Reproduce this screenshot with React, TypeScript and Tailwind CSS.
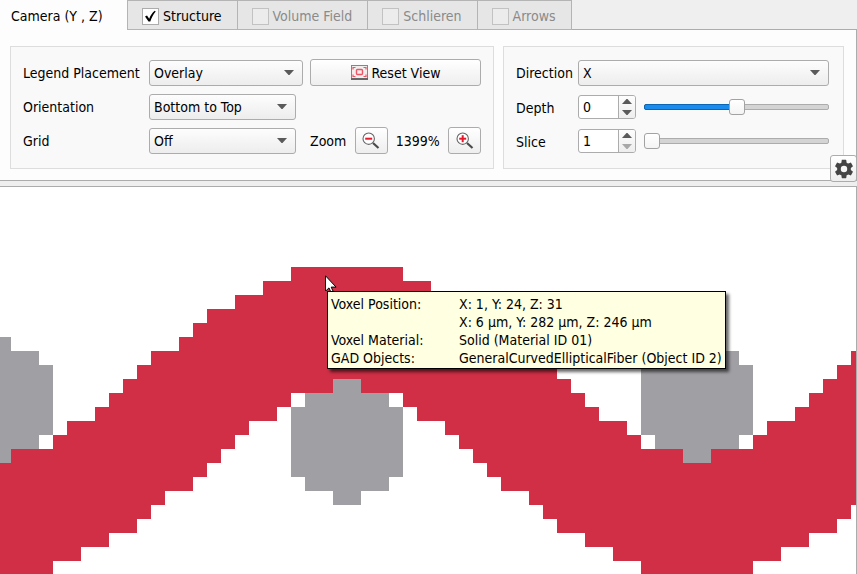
import { useState } from "react"
import type { ReactNode } from "react"

const CELL = 14

// [row, first column, end column]
type Run = [number, number, number]

const FIBER: Run[] = [
    [0, 20, 28],
    [1, 18, 30],
    [2, 16, 32],
    [3, 14, 34],
    [4, 13, 35],
    [5, 12, 36],
    [6, 10, 38], [6, 60, 61],
    [7, 9, 39], [7, 59, 61],
    [8, 8, 40], [8, 58, 61],
    [9, 7, 20], [9, 28, 41], [9, 57, 61],
    [10, 6, 19], [10, 29, 42], [10, 56, 61],
    [11, 4, 17], [11, 31, 44], [11, 54, 61],
    [12, 3, 16], [12, 32, 45], [12, 53, 61],
    [13, 0, 15], [13, 33, 61],
    [14, -1, 14], [14, 34, 61],
    [15, -1, 13], [15, 35, 61],
    [16, -1, 11], [16, 37, 61],
    [17, -1, 10], [17, 38, 60],
    [18, -1, 9], [18, 39, 59],
    [19, -1, 7], [19, 41, 57],
    [20, -1, 5], [20, 43, 55],
    [21, -1, 3], [21, 45, 53],
]

// cross fibers: [center column, top row]
const CROSS_FIBERS: [number, number][] = [[-1, 5], [24, 8], [49, 5]]
const CROSS_HALF_WIDTHS = [1, 3, 4, 4, 4, 4, 4, 3, 1]

const VoxelView = () => (
    <svg className="block min-w-0 flex-1" shapeRendering="crispEdges" role="img" aria-label="Voxel slice">
        <g transform="translate(11 80)">
            {FIBER.map(([row, start, end]) => (
                <rect key={`${row}-${start}`} x={start * CELL} y={row * CELL} width={(end - start) * CELL} height={CELL} fill="#d02f46" />
            ))}
            {CROSS_FIBERS.map(([center, top]) =>
                CROSS_HALF_WIDTHS.map((half, i) => (
                    <rect key={`${center}-${i}`} x={(center - half) * CELL} y={(top + i) * CELL} width={half * 2 * CELL} height={CELL} fill="#a09fa4" />
                ))
            )}
        </g>
    </svg>
)

const BUTTON = "flex h-[27px] items-center justify-center rounded-[3px] border border-[#acacac] bg-linear-to-b from-white to-[#eeeeee]"

const Combo = ({ id, options, className }: { id: string, options: string[], className: string }) => (
    <div className={`relative ${className}`}>
        <select id={id} className="block h-[26px] w-full appearance-none rounded-[3px] border border-[#acacac] bg-linear-to-b from-[#fdfdfd] to-[#ededed] pr-6 pl-1">
            {options.map((option) => <option key={option}>{option}</option>)}
        </select>
        <svg className="pointer-events-none absolute top-[10px] right-[9px]" width="10" height="6" viewBox="0 0 10 6">
            <path d="M0 0h10L5.5 5h-1z" fill="#5a5a5a" />
        </svg>
    </div>
)

const CheckTab = ({ label, defaultChecked, disabled }: { label: string, defaultChecked?: boolean, disabled?: boolean }) => (
    <label className={`flex h-[30px] items-center gap-1 border-t border-r border-b border-[#b4b4b4] bg-[#e6e6e6] pr-[15px] pl-[14px] pt-[2px] ${disabled ? "text-[#8a8a8a]" : ""}`}>
        <span className="relative flex">
            <input type="checkbox" defaultChecked={defaultChecked} disabled={disabled} className="peer size-[17px] appearance-none border border-[#acacac] bg-white disabled:border-[#c2c2c2] disabled:bg-[#ececec]" />
            <svg className="pointer-events-none absolute inset-0 hidden peer-checked:block" width="17" height="17" viewBox="0 0 17 17">
                <path d="M3 8.5l2-1 2.2 3.3C8.500 7.500 10.300 4.600 12.800 2.800l.9.7C11.200 6.300 9.600 9.800 8.300 13.600H6.500z" fill="#000" />
            </svg>
        </span>
        <span>{label}</span>
    </label>
)

const SliceRow = ({ label, min, initial, position }: { label: string, min: number, initial: number, position: number }) => {

    const [value, setValue] = useState(initial)
    const [slider, setSlider] = useState(position)
    const id = label.toLowerCase()
    const atMin = value <= min

    return (
        <div className="flex h-[27px] items-center">
            <label htmlFor={id} className="w-[62px] pt-[2px]">{label}</label>
            <div className="flex h-[24px] w-[58px] overflow-hidden rounded-[3px] border border-[#acacac] bg-white">
                <input
                    id={id}
                    type="number"
                    value={value}
                    onChange={(e) => setValue(Number(e.target.value))}
                    className="w-0 min-w-0 flex-1 appearance-none pl-1 outline-none [-moz-appearance:textfield] [&::-webkit-inner-spin-button]:appearance-none"
                />
                <div className="flex w-[17px] flex-col border-l border-[#acacac] bg-linear-to-b from-[#fdfdfd] to-[#eeeeee]">
                    <button type="button" aria-label={`Increase ${id}`} onClick={() => setValue(value + 1)} className="flex flex-1 items-center justify-center">
                        <svg width="10" height="5" viewBox="0 0 10 5"><path d="M0 5L4.500 0h1L10 5z" fill="#5a5a5a" /></svg>
                    </button>
                    <button type="button" aria-label={`Decrease ${id}`} disabled={atMin} onClick={() => setValue(value - 1)} className="flex flex-1 items-center justify-center">
                        <svg width="10" height="5" viewBox="0 0 10 5"><path d="M0 0h10L5.500 5h-1z" fill={atMin ? "#a8a8a8" : "#5a5a5a"} /></svg>
                    </button>
                </div>
            </div>
            <div className="relative ml-2 flex min-w-0 flex-1 items-center">
                <div className="absolute inset-x-0 h-[6px] overflow-hidden rounded-[2px] border border-[#acacac] bg-[#d4d4d4]" />
                <div className="absolute left-0 h-[6px] rounded-[2px] border border-[#0b66b4] bg-[#1a8cee]" style={{ width: `${slider}%`, opacity: slider > 0 ? 1 : 0 }} />
                <input
                    type="range"
                    aria-label={`${label} position`}
                    value={slider}
                    onChange={(e) => setSlider(Number(e.target.value))}
                    className="relative h-4 w-full appearance-none bg-transparent [&::-webkit-slider-thumb]:size-4 [&::-webkit-slider-thumb]:appearance-none [&::-webkit-slider-thumb]:rounded-[3px] [&::-webkit-slider-thumb]:border [&::-webkit-slider-thumb]:border-[#a2a2a2] [&::-webkit-slider-thumb]:bg-linear-to-b [&::-webkit-slider-thumb]:from-white [&::-webkit-slider-thumb]:to-[#f4f4f4]"
                />
            </div>
        </div>
    )
}

const ZoomIcon = ({ plus }: { plus?: boolean }) => (
    <svg width="18" height="18" viewBox="0 0 18 18" fill="none">
        <path d="M11 11l5.500 5" stroke="#4a4a4a" strokeWidth="2.200" />
        <circle cx="6.700" cy="6.700" r="5.700" fill="#fff" stroke="#666" strokeWidth="1.100" />
        <path d="M3.200 6.700h7" stroke="#e8192c" strokeWidth="2" />
        {plus && <path d="M6.700 3.200v7" stroke="#e8192c" strokeWidth="2" />}
    </svg>
)

const ResetIcon = () => (
    <svg width="17" height="15" viewBox="0 0 17 15" fill="none">
        <rect x=".5" y=".5" width="16" height="13" fill="#f3eeee" stroke="#858585" />
        <path d="M0 14h17" stroke="#666" strokeWidth="2" />
        <rect x="5.500" y="4.500" width="6" height="5" rx="1" stroke="#ee5565" strokeWidth="1.400" />
        <path d="M2 4.500V2.500h2.500M12.500 2.500H15v2M2 9.500v2h2.500M12.500 11.500H15v-2" stroke="#ee5565" strokeWidth="1.200" />
    </svg>
)

const GearIcon = () => (
    <svg width="22" height="22" viewBox="0 0 24 24">
        <path fill="#444" d="M19.430 12.980c.04-.32.07-.64.07-.98s-.03-.66-.07-.98l2.110-1.650c.19-.15.24-.42.12-.64l-2-3.460c-.12-.22-.39-.3-.61-.22l-2.490 1c-.52-.4-1.080-.73-1.690-.98l-.38-2.650A.488.488 0 0 0 14 2h-4c-.25 0-.46.18-.49.42l-.38 2.650c-.61.25-1.170.59-1.690.98l-2.490-1c-.23-.09-.49 0-.61.22l-2 3.460c-.13.22-.07.49.12.64l2.110 1.650c-.04.32-.07.65-.07.98s.03.66.07.98l-2.110 1.650c-.19.15-.24.42-.12.64l2 3.460c.12.22.39.3.61.22l2.490-1c.52.4 1.080.73 1.690.98l.38 2.650c.03.24.24.42.49.42h4c.25 0 .46-.18.49-.42l.38-2.650c.61-.25 1.170-.59 1.690-.98l2.490 1c.23.09.49 0 .61-.22l2-3.460c.12-.22.07-.49-.12-.64zM12 15.500A3.500 3.500 0 1 1 12 8.500a3.500 3.500 0 0 1 0 7z" />
    </svg>
)

const TipRow = ({ name, children }: { name: string, children: ReactNode }) => (
    <div className="flex">
        <dt className="w-32 shrink-0">{name}</dt>
        <dd>{children}</dd>
    </div>
)

const App = () => {
    return (
        <div className="flex min-h-screen flex-col bg-[#efefef] font-['DejaVu_Sans_Condensed','Noto_Sans',sans-serif] text-[14px] leading-[18px] text-black">
            <div className="flex border-b border-[#acacac] bg-[#efefef] *:-mb-px">
                <button type="button" className="h-[30px] min-w-32 border-r border-[#b4b4b4] bg-[#fdfdfd] px-[11px] pt-[2px] text-left">Camera (Y , Z)</button>
                <CheckTab label="Structure" defaultChecked />
                <CheckTab label="Volume Field" disabled />
                <CheckTab label="Schlieren" disabled />
                <CheckTab label="Arrows" disabled />
            </div>

            <div className="relative flex gap-[9px] border-r border-b border-[#acacac] bg-[#fdfdfd] pt-4 pr-3 pb-[11px] pl-[10px]">
                <div className="flex flex-col gap-[7px] border border-[#dddddd] bg-[#f9f9f9] px-3 pt-3 pb-[14px]">
                    <div className="flex h-[27px] items-center">
                        <label htmlFor="legend" className="w-[126px] whitespace-nowrap">Legend Placement</label>
                        <Combo id="legend" options={["Overlay"]} className="w-[154px]" />
                        <button type="button" className={`${BUTTON} ml-[7px] w-[171px] gap-1`}>
                            <ResetIcon />
                            Reset View
                        </button>
                    </div>
                    <div className="flex h-[27px] items-center">
                        <label htmlFor="orientation" className="w-[126px]">Orientation</label>
                        <Combo id="orientation" options={["Bottom to Top"]} className="w-[147px]" />
                    </div>
                    <div className="flex h-[27px] items-center">
                        <label htmlFor="grid" className="w-[126px]">Grid</label>
                        <Combo id="grid" options={["Off"]} className="w-[147px]" />
                        <div className="ml-[14px] flex flex-1 items-center justify-between">
                            <span>Zoom</span>
                            <button type="button" aria-label="Zoom out" className={`${BUTTON} w-[33px]`}><ZoomIcon /></button>
                            <span>1399%</span>
                            <button type="button" aria-label="Zoom in" className={`${BUTTON} w-[33px]`}><ZoomIcon plus /></button>
                        </div>
                    </div>
                </div>

                <div className="flex min-w-0 flex-1 flex-col gap-[7px] border border-[#dddddd] bg-[#f9f9f9] pt-3 pr-[14px] pb-[14px] pl-3">
                    <div className="flex h-[27px] items-center">
                        <label htmlFor="direction" className="w-[62px]">Direction</label>
                        <Combo id="direction" options={["X", "Y", "Z"]} className="min-w-0 flex-1" />
                    </div>
                    <SliceRow label="Depth" min={-100} initial={0} position={50} />
                    <SliceRow label="Slice" min={1} initial={1} position={0} />
                </div>

                <button type="button" aria-label="Settings" className={`${BUTTON} absolute -right-px -bottom-[2px] w-[27px]`}><GearIcon /></button>
            </div>

            <div className="relative mt-[5px] flex flex-1 overflow-hidden border-t border-r border-[#acacac] bg-white">
                <VoxelView />
                <dl className="absolute top-[104px] left-[327px] border border-black bg-[#ffffe1] px-[3px] pt-[3px] pb-px whitespace-nowrap shadow-[3px_3px_3px_rgba(0,0,0,0.6)]">
                    <TipRow name="Voxel Position:">
                        X: 1, Y: 24, Z: 31<br />
                        X: 6 µm, Y: 282 µm, Z: 246 µm
                    </TipRow>
                    <TipRow name="Voxel Material:">Solid (Material ID 01)</TipRow>
                    <TipRow name="GAD Objects:">GeneralCurvedEllipticalFiber (Object ID 2)</TipRow>
                </dl>
                <svg className="absolute top-[88px] left-[325px]" width="12" height="16" viewBox="0 0 12 16">
                    <path d="M.5.8v15.400l3.500-3.300 2.300 5.200 2.200-1-2.300-5h4.900z" fill="#fff" stroke="#000" />
                </svg>
            </div>
        </div>
    )
}

export default App
